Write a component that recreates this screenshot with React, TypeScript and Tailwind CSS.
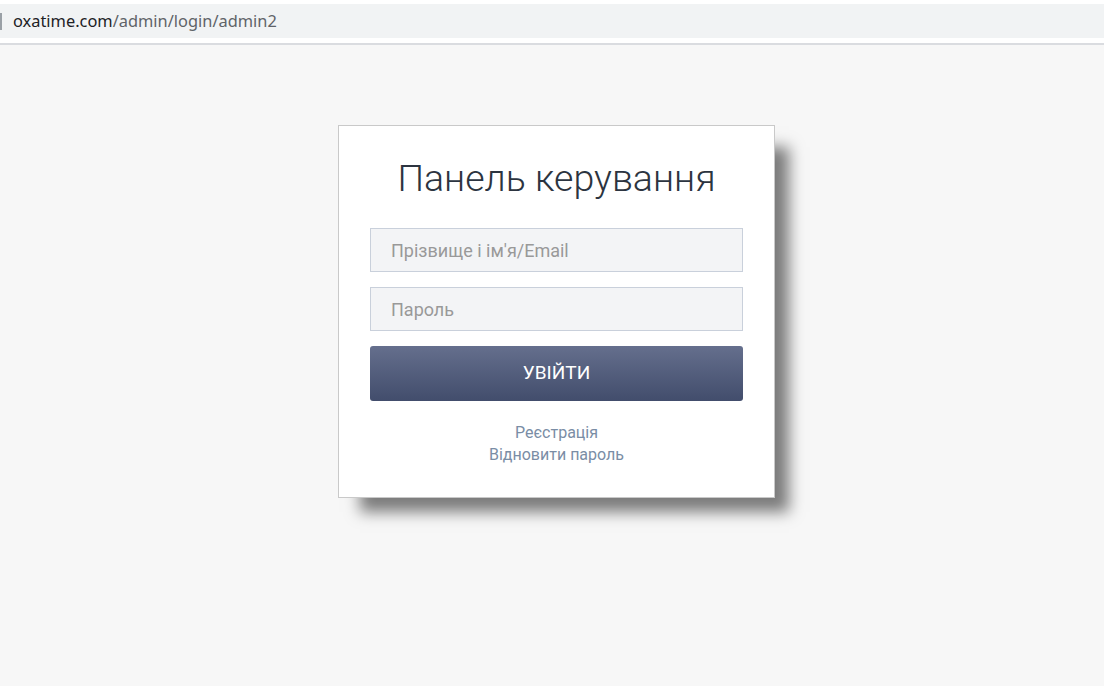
import React from 'react';

const roboto = { fontFamily: 'Roboto, "Open Sans", sans-serif' };

function AddressBar() {
  return (
    <div className="bg-white">
      <div className="h-[4px]" />
      <div className="relative flex h-[34px] items-center bg-[#f1f3f4] pl-[13px]">
        <span className="absolute left-0 top-[9px] h-[17px] w-[2px] bg-[#9aa0a6]" />
        <span
          className="text-[16.4px] leading-none text-[#202124]"
          style={{ fontFamily: '"Segoe UI", "Noto Sans", "Open Sans", sans-serif' }}
        >
          oxatime.com<span className="text-[#5f6368]">/admin/login/admin2</span>
        </span>
      </div>
      <div className="h-[5px]" />
      <div className="h-[2px] bg-[#dadce0]" />
    </div>
  );
}

export default function App() {
  return (
    <div className="flex h-[686px] w-[1104px] flex-col bg-[#f7f7f7]" style={roboto}>
      <AddressBar />
      <div className="flex flex-1 justify-center pl-[9px] pt-[80px]">
        <div className="h-[373px] w-[437px] border border-[#c9c9c9] bg-white px-[31px] pt-[28px] shadow-[18px_18px_14px_-4px_rgba(0,0,0,0.5)]">
          <h1 className="text-center text-[37.5px] font-light leading-[48px] text-[#2c3440]">
            Панель керування
          </h1>
          <form className="mt-[26px] flex flex-col" onSubmit={e => e.preventDefault()}>
            <input
              type="text"
              placeholder="Прізвище і ім'я/Email"
              className="h-[44px] w-full border border-[#c9d0db] bg-[#f3f4f6] px-[20px] text-[18px] text-[#333] outline-none placeholder:text-[#999]"
            />
            <input
              type="password"
              placeholder="Пароль"
              className="mt-[15px] h-[44px] w-full border border-[#c9d0db] bg-[#f3f4f6] px-[20px] text-[18px] text-[#333] outline-none placeholder:text-[#999]"
            />
            <button
              type="submit"
              className="mt-[15px] h-[55px] w-full rounded-[3px] bg-gradient-to-b from-[#656f8d] to-[#424d6c] text-[19px] font-normal text-white"
            >
              УВІЙТИ
            </button>
          </form>
          <div className="mt-[21px] flex flex-col items-center text-[16px] leading-[22px] text-[#7a8da5]">
            <a href="#">Реєстрація</a>
            <a href="#">Відновити пароль</a>
          </div>
        </div>
      </div>
    </div>
  );
}
